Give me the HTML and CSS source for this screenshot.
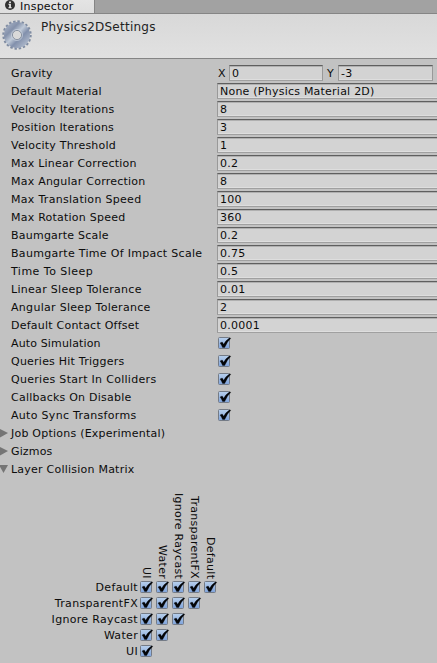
FILE: index.html
```html
<!DOCTYPE html>
<html lang="en">
<head>
<meta charset="utf-8">
<title>Inspector</title>
<link rel="stylesheet" href="styles.css">
</head>
<body>
<svg class="defs" width="0" height="0">
  <defs>
    <linearGradient id="blue" x1="0" y1="0" x2="0" y2="1"><stop offset="0" stop-color="#b8d0ec"/><stop offset="1" stop-color="#7fa3db"/></linearGradient>
    <linearGradient id="steel" x1="0" y1="0" x2="1" y2="1"><stop offset="0" stop-color="#b5bfcf"/><stop offset=".3" stop-color="#8491ab"/><stop offset=".47" stop-color="#c0cad8"/><stop offset=".62" stop-color="#8290ac"/><stop offset="1" stop-color="#c5cedb"/></linearGradient>
    <symbol id="check" viewBox="0 0 14 13">
      <rect x=".5" y=".5" width="11" height="11" rx="1" fill="url(#blue)" stroke="#747b86"/>
      <path d="M2 6 4.2 5 5.6 7.3Q8 3.2 11.6 .8L12.8 1.3Q8.9 5 6.7 10.5H4.6Q3.7 8 2 6Z" fill="#030508" stroke="#030508" stroke-width=".3"/>
    </symbol>
  </defs>
</svg>
<header class="tabs"><div class="tab">
  <svg class="info" viewBox="0 0 10 10"><circle cx="5" cy="5" r="5" fill="#333"/><path d="M4.1 1.4h1.8v1.5H4.1zM3.4 3.8h2.5v3.4h.8v1H3.4v-1h.8V4.8h-.8z" fill="#eee"/></svg>
  <span>Inspector</span></div></header>
<section class="title">
  <svg class="gear" viewBox="0 0 30 30"><circle cx="15" cy="15" r="13.5" fill="none" stroke="#7f8ca2" stroke-width="2.4" stroke-dasharray="2.4 1.84"/><circle cx="15" cy="15" r="13" fill="url(#steel)"/><circle cx="15" cy="15" r="4.6" fill="#d9d9d9" stroke="#858f9e"/><circle cx="15" cy="15" r="5.5" fill="none" stroke="#d5dce5" stroke-width=".6"/></svg>
  <h1>Physics2DSettings</h1>
</section>
<main>
  <div class="row"><label>Gravity</label><div class="vector"><span>X</span><div class="field">0</div><span>Y</span><div class="field">-3</div></div></div>
  <div class="row"><label class="tight">Default Material</label><div class="field">None (Physics Material 2D)</div></div>
  <div class="row"><label>Velocity Iterations</label><div class="field">8</div></div>
  <div class="row"><label>Position Iterations</label><div class="field">3</div></div>
  <div class="row"><label>Velocity Threshold</label><div class="field">1</div></div>
  <div class="row"><label>Max Linear Correction</label><div class="field">0.2</div></div>
  <div class="row"><label>Max Angular Correction</label><div class="field">8</div></div>
  <div class="row"><label class="loose">Max Translation Speed</label><div class="field">100</div></div>
  <div class="row"><label>Max Rotation Speed</label><div class="field">360</div></div>
  <div class="row"><label>Baumgarte Scale</label><div class="field">0.2</div></div>
  <div class="row"><label class="loose">Baumgarte Time Of Impact Scale</label><div class="field">0.75</div></div>
  <div class="row"><label class="wide">Time To Sleep</label><div class="field">0.5</div></div>
  <div class="row"><label class="loose">Linear Sleep Tolerance</label><div class="field">0.01</div></div>
  <div class="row"><label class="loose">Angular Sleep Tolerance</label><div class="field">2</div></div>
  <div class="row"><label>Default Contact Offset</label><div class="field">0.0001</div></div>
  <div class="row"><label class="tight">Auto Simulation</label><svg class="check"><use href="#check"/></svg></div>
  <div class="row"><label>Queries Hit Triggers</label><svg class="check"><use href="#check"/></svg></div>
  <div class="row"><label class="loose">Queries Start In Colliders</label><svg class="check"><use href="#check"/></svg></div>
  <div class="row"><label>Callbacks On Disable</label><svg class="check"><use href="#check"/></svg></div>
  <div class="row"><label class="loose">Auto Sync Transforms</label><svg class="check"><use href="#check"/></svg></div>
  <div class="row fold"><svg class="arrow" viewBox="0 0 8 10"><path d="M0 1 8 5 0 9.5Z"/></svg><label>Job Options (Experimental)</label></div>
  <div class="row fold"><svg class="arrow" viewBox="0 0 8 10"><path d="M0 1 8 5 0 9.5Z"/></svg><label class="tight">Gizmos</label></div>
  <div class="row fold"><svg class="arrow" viewBox="0 0 8 10"><path d="M-1 1H8L3.5 9Z"/></svg><label>Layer Collision Matrix</label></div>
</main>
<section class="matrix">
  <div class="columns"><span>UI</span><span>Water</span><span>Ignore Raycast</span><span>TransparentFX</span><span>Default</span></div>
  <div class="line"><label>Default</label><svg class="check"><use href="#check"/></svg><svg class="check"><use href="#check"/></svg><svg class="check"><use href="#check"/></svg><svg class="check"><use href="#check"/></svg><svg class="check"><use href="#check"/></svg></div>
  <div class="line"><label>TransparentFX</label><svg class="check"><use href="#check"/></svg><svg class="check"><use href="#check"/></svg><svg class="check"><use href="#check"/></svg><svg class="check"><use href="#check"/></svg></div>
  <div class="line"><label>Ignore Raycast</label><svg class="check"><use href="#check"/></svg><svg class="check"><use href="#check"/></svg><svg class="check"><use href="#check"/></svg></div>
  <div class="line"><label>Water</label><svg class="check"><use href="#check"/></svg><svg class="check"><use href="#check"/></svg></div>
  <div class="line"><label>UI</label><svg class="check"><use href="#check"/></svg></div>
</section>
</body>
</html>
```
FILE: styles.css
```css
* { box-sizing: border-box; }
body {
  margin: 0;
  height: 663px;
  overflow: hidden;
  background: #c2c2c2;
  color: #0c0c0c;
  font: 11px/16px "DejaVu Sans", sans-serif;
  letter-spacing: 0.23px;
  white-space: nowrap;
}
svg { display: block; flex: none; }
.defs { position: absolute; }
.tabs { height: 14px; background: #a2a2a2; border-bottom: 1px solid #858585; }
.tab {
  display: flex;
  width: 95px;
  height: 13px;
  padding-left: 5px;
  background: linear-gradient(#e4e4e4, #dedede);
  border-right: 1px solid #858585;
  line-height: 13px;
}
.info { width: 10px; height: 10px; margin-right: 5px; }
.title {
  display: flex;
  height: 45px;
  padding: 6px 0 0 2px;
  background: linear-gradient(#d8d8d8, #e1e1e1);
  border-bottom: 1px solid #858585;
  color: #222;
}
.gear { width: 30px; height: 30px; }
h1 { margin: -1px 0 0 9px; font-size: 12px; font-weight: normal; line-height: 16px; letter-spacing: 0.25px; }
main { padding-top: 5px; }
.row { display: flex; height: 18px; padding: 1px 0 1px 11px; }
.row > label { width: 206px; flex: none; line-height: 18px; }
.tight { letter-spacing: 0.14px; }
.loose { letter-spacing: 0.3px; }
.wide { letter-spacing: 0.48px; }
.field {
  flex: 1;
  height: 16px;
  padding-left: 2px;
  background: #d3d3d3;
  border: 1px solid #999;
  border-top: 1px solid #5f5f5f;
  border-bottom-color: #a0a0a0;
  box-shadow: inset 0 1px #b0b0b0, inset 0 -1px #dedede;
  line-height: 15px;
}
.row > .field { border-right: 0; }
.vector { display: grid; grid-template-columns: 12px 94px 15px 95px; width: 220px; }
.vector span { padding-left: 1px; line-height: 18px; }
.vector span:nth-child(3) { padding-left: 4px; }
.check { width: 14px; height: 13px; margin: 2px 0 0 1px; }
.fold { padding-left: 0; }
.arrow { width: 8px; height: 10px; margin: 3px 3px 0 0; fill: #757575; overflow: visible; }
.columns {
  display: flex;
  align-items: flex-end;
  height: 101px;
  padding-left: 138px;
}
.columns span { width: 16px; writing-mode: vertical-rl; line-height: 16px; letter-spacing: 0.3px; }
.line { display: flex; height: 16px; }
.line label { width: 138px; text-align: right; line-height: 18px; letter-spacing: 0.32px; }
.line .check { margin: 2px 0 0 2px; }
```
